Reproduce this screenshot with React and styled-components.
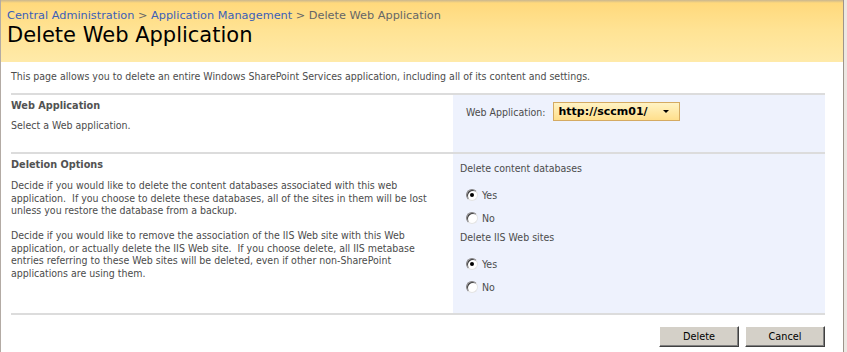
import React from "react";
import styled, { createGlobalStyle } from "styled-components";

const GlobalStyle = createGlobalStyle`
  html, body {
    margin: 0;
    padding: 0;
    background: #ece7e2;
  }
  body {
    font-family: "DejaVu Sans Condensed", "DejaVu Sans", sans-serif;
    font-size: 10.5px;
    color: #4c4c4c;
  }
`;

const Page = styled.div`
  width: 847px;
  height: 352px;
  overflow: hidden;
  background: #ece7e2;
`;

const Frame = styled.div`
  width: 842px;
  height: 352px;
  background: #fff;
  border-left: 1px solid #b3aba4;
  border-right: 1px solid #9d948b;
  display: flex;
  flex-direction: column;
`;

const Header = styled.div`
  height: 62px;
  box-sizing: border-box;
  padding: 8px 0 0 6px;
  background: linear-gradient(#c9b68f 0, #ffd97c 3px, #ffe394 30px, #ffeaa9 62px);
`;

const Crumbs = styled.div`
  font-family: "DejaVu Sans", sans-serif;
  font-size: 11.3px;
  line-height: 15px;
  color: #666;
  a {
    color: #3c5fb8;
    text-decoration: none;
  }
`;

const Title = styled.h1`
  margin: 0;
  font-family: "DejaVu Sans", sans-serif;
  font-weight: normal;
  font-size: 21px;
  line-height: 25px;
  color: #000;
`;

const Body = styled.div`
  padding: 0 18px 0 10px;
`;

const Intro = styled.p`
  margin: 0;
  padding: 8px 0 10px;
  line-height: 13px;
`;

const Section = styled.div`
  display: grid;
  grid-template-columns: 442px 1fr;
  border-top: 2px solid #dcdcdc;
`;

const Describe = styled.div`
  padding: ${(p) => p.$pad || "5px 0 0"};
  padding-right: 14px;
  line-height: 12.5px;
  p {
    margin: 0 0 12.5px;
  }
`;

const SectionTitle = styled.h3`
  margin: 0 0 ${(p) => p.$gap || 8}px;
  font-size: 10.8px;
  font-weight: bold;
  color: #525252;
  line-height: 13px;
`;

const Panel = styled.div`
  background: #eef2fd;
  padding: ${(p) => p.$pad};
  min-height: ${(p) => p.$h}px;
  box-sizing: border-box;
`;

const FieldRow = styled.div`
  display: flex;
  align-items: center;
  gap: 7px;
`;

const Select = styled.div`
  width: 127px;
  height: 19px;
  box-sizing: border-box;
  border: 1px solid #d4aa62;
  background: linear-gradient(#fff3c4, #ffdf8c);
  display: flex;
  align-items: center;
  justify-content: space-between;
  padding: 0 10px 0 5px;
  font-family: "DejaVu Sans", sans-serif;
  font-weight: bold;
  font-size: 11px;
  color: #000;
  &::after {
    content: "";
    border-left: 3px solid transparent;
    border-right: 3px solid transparent;
    border-top: 3px solid #000;
  }
`;

const GroupLabel = styled.div`
  line-height: 13px;
  margin-bottom: ${(p) => p.$gap}px;
`;

const Option = styled.label`
  display: flex;
  align-items: center;
  gap: 4px;
  height: 13px;
  margin: 0 0 ${(p) => p.$gap}px 6px;
`;

const Radio = styled.span`
  width: 12px;
  height: 12px;
  box-sizing: border-box;
  border-radius: 50%;
  border: 1px solid;
  border-color: #848284 #e4e4e4 #e4e4e4 #848284;
  box-shadow: inset 1px 1px 0 #404040;
  background: #fff;
  display: flex;
  align-items: center;
  justify-content: center;
  &::after {
    content: "";
    width: 4px;
    height: 4px;
    border-radius: 50%;
    background: ${(p) => (p.$on ? "#000" : "transparent")};
  }
`;

const Footer = styled.div`
  border-top: 2px solid #dcdcdc;
  display: flex;
  justify-content: flex-end;
  gap: 6px;
  padding-top: 11px;
`;

const Button = styled.button`
  width: 80px;
  height: 21px;
  padding: 0;
  font-family: "DejaVu Sans Condensed", "DejaVu Sans", sans-serif;
  font-size: 10.8px;
  color: #000;
  background: #d4d0c8;
  border: 1px solid;
  border-color: #fff #404040 #404040 #fff;
  box-shadow: inset -1px -1px 0 #808080;
`;

const RadioGroup = ({ label, gap }) => (
  <>
    <GroupLabel $gap={gap}>{label}</GroupLabel>
    <Option $gap={10}>
      <Radio $on />
      Yes
    </Option>
    <Option $gap={7}>
      <Radio />
      No
    </Option>
  </>
);

export default function App() {
  return (
    <Page>
      <GlobalStyle />
      <Frame>
        <Header>
          <Crumbs>
            <a href="#">Central Administration</a> &gt;{" "}
            <a href="#">Application Management</a> &gt; Delete Web Application
          </Crumbs>
          <Title>Delete Web Application</Title>
        </Header>
        <Body>
          <Intro>
            This page allows you to delete an entire Windows SharePoint Services
            application, including all of its content and settings.
          </Intro>
          <Section>
            <Describe $pad="4px 0 0">
              <SectionTitle $gap={7}>Web Application</SectionTitle>
              Select a Web application.
            </Describe>
            <Panel $pad="7px 0 0 13px" $h={57}>
              <FieldRow>
                Web Application:
                <Select>http://sccm01/</Select>
              </FieldRow>
            </Panel>
          </Section>
          <Section>
            <Describe $pad="4px 0 0">
              <SectionTitle $gap={8}>Deletion Options</SectionTitle>
              <p>
                Decide if you would like to delete the content databases
                associated with this web application.&nbsp; If you choose to
                delete these databases, all of the sites in them will be lost
                unless you restore the database from a backup.
              </p>
              <p>
                Decide if you would like to remove the association of the IIS
                Web site with this Web application, or actually delete the IIS
                Web site.&nbsp; If you choose delete, all IIS metabase entries
                referring to these Web sites will be deleted, even if other
                non-SharePoint applications are using them.
              </p>
            </Describe>
            <Panel $pad="8px 0 0 7px" $h={159}>
              <RadioGroup label="Delete content databases" gap={13} />
              <RadioGroup label="Delete IIS Web sites" gap={13} />
            </Panel>
          </Section>
          <Footer>
            <Button>Delete</Button>
            <Button>Cancel</Button>
          </Footer>
        </Body>
      </Frame>
    </Page>
  );
}
